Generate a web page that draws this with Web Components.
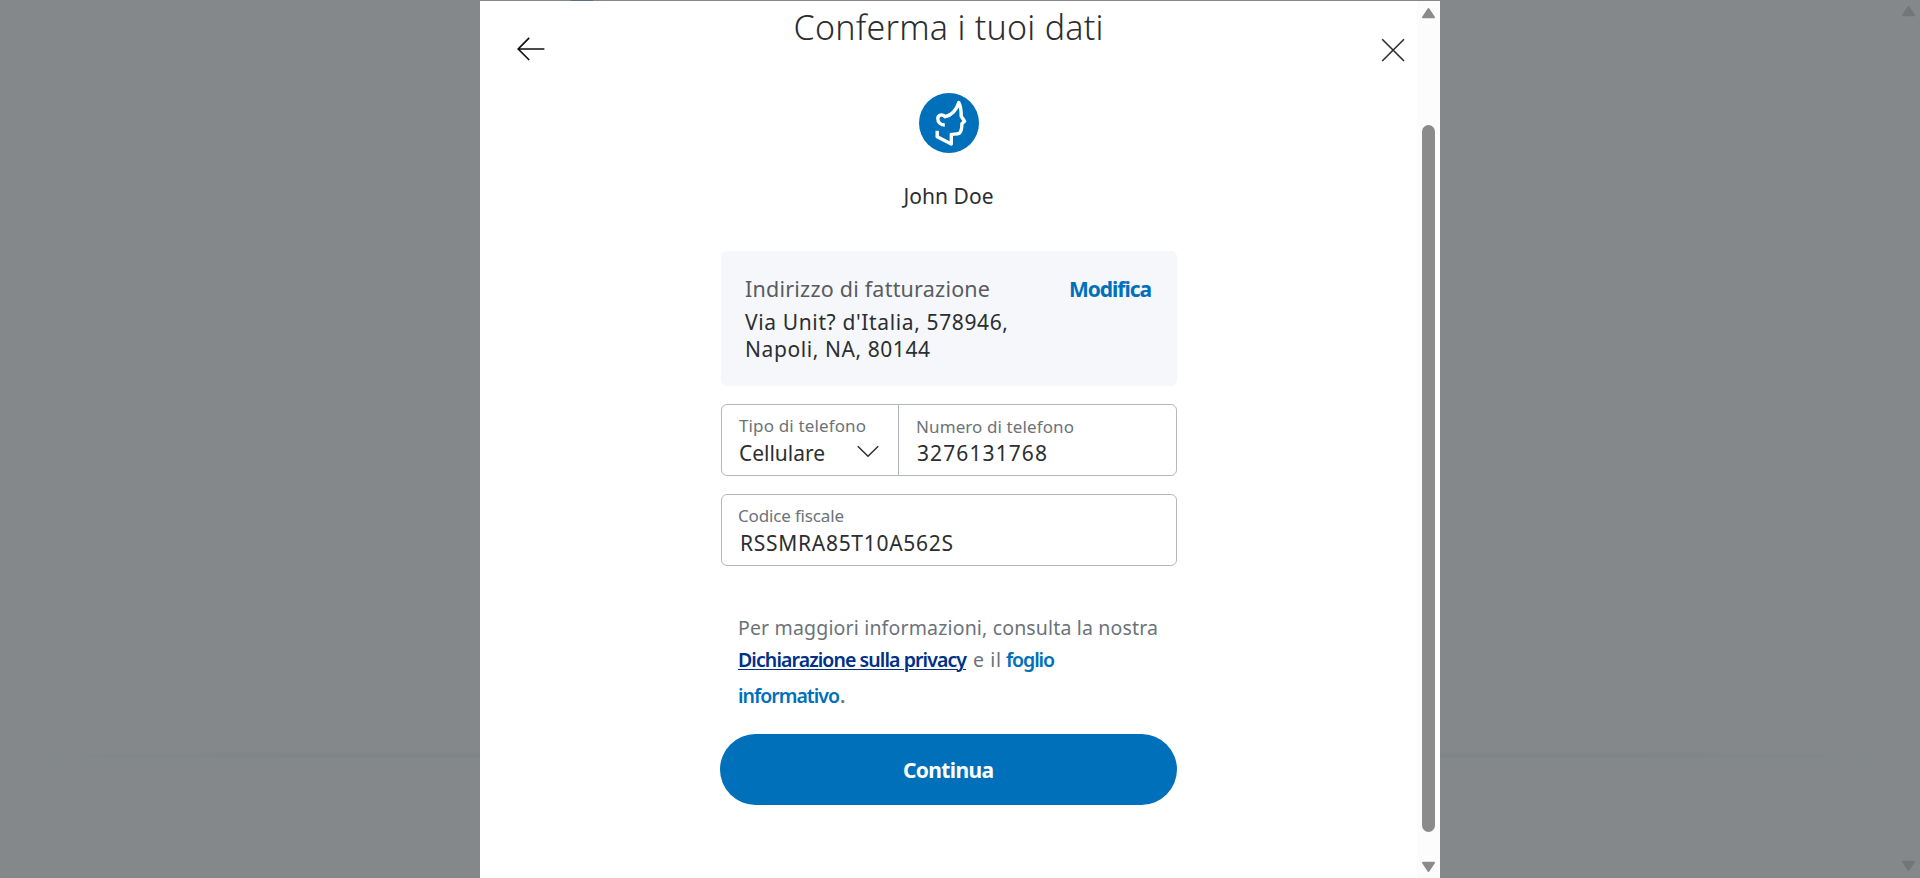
<!DOCTYPE html>
<html lang="it">
<head>
<meta charset="utf-8">
<title>Conferma i tuoi dati</title>
<style>
html,body{margin:0;height:100%;overflow:hidden;background:#84888b}
body{font-family:"Noto Sans","Open Sans",sans-serif;color:#2c2e2f}
</style>
</head>
<body>
<confirm-page></confirm-page>
<script>
class Base extends HTMLElement{
  constructor(){super();this.attachShadow({mode:'open'}).innerHTML=this.view();}
  view(){return '<slot></slot>';}
}
// Line of text whose tracking is adjusted to fill the width in "w".
customElements.define('ui-text',class extends Base{
  view(){return `<style>:host{display:block;white-space:nowrap;font-size:21px;line-height:28px}
  span{display:inline-block;font-size:inherit}
  :host(.u) span{text-decoration:underline;text-decoration-thickness:1px;text-underline-offset:2px;text-decoration-skip-ink:auto}</style><span><slot></slot></span>`;}
  connectedCallback(){requestAnimationFrame(()=>this.fit());this.fit();}
  fit(){
    const w=+this.getAttribute('w'),s=this.shadowRoot.querySelector('span'),n=this.textContent.length;
    if(!w||!n)return;
    s.style.letterSpacing='0px';s.style.marginRight='0px';
    const d=(w-s.getBoundingClientRect().width)/(n-1);
    s.style.letterSpacing=d+'px';
    s.style.marginRight=-d+'px';
  }
});
customElements.define('user-avatar',class extends Base{
  view(){return `<style>:host{display:block;width:60px;height:60px}svg{display:block}</style>
  <svg width="60" height="60" viewBox="0 0 60 60"><circle cx="30" cy="30" r="30" fill="#0070ba"/>
  <path d="M25.8 32C21.4 32.1 18.7 29 18.8 25.6C18.9 22 23.2 20.6 26.2 23.7C32.5 22.2 37.5 16.5 39.8 9.6C41.8 13.6 42.3 18.5 42.2 23.2L45.6 28.2L42.9 30.7C42.9 35.4 42.2 38.6 40.3 40.2C38.3 41.4 35 40.9 32.3 41.4V51L18.2 43.7V37.8" fill="none" stroke="#fff" stroke-width="3.4" stroke-linejoin="round"/></svg>`;}
});
customElements.define('scroll-rail',class extends Base{
  view(){return `<style>:host{display:flex;flex-direction:column;align-items:center;width:23px;box-sizing:border-box;background:var(--rail,#fcfcfc);color:#8b8b8b;padding:6px 0 5px}
  svg{display:block;flex:none}i{display:block;width:13px;height:707px;margin:106px 0 auto;border-radius:7px;background:var(--thumb,#8b8b8b)}</style>
  <svg width="15" height="12" viewBox="0 0 15 12"><path d="M7.5 2L13 10.2H2Z" fill="currentColor" stroke="currentColor" stroke-width="2" stroke-linejoin="round"/></svg><i></i>
  <svg width="15" height="12" viewBox="0 0 15 12"><path d="M2 1.8H13L7.5 10Z" fill="currentColor" stroke="currentColor" stroke-width="2" stroke-linejoin="round"/></svg>`;}
});
customElements.define('address-card',class extends Base{
  view(){return `<style>:host{display:flex;justify-content:space-between;box-sizing:border-box;height:135px;margin-top:41px;padding:24px 25px 22px 24px;border-radius:6px;background:#f5f7fb}</style><div><slot></slot></div><slot name="action"></slot>`;}
});
customElements.define('form-field',class extends Base{
  view(){return `<style>:host{display:block;flex:1;box-sizing:border-box;padding:11px 18px 0}</style><slot></slot>`;}
});
customElements.define('field-group',class extends Base{
  view(){return `<style>:host{display:flex;box-sizing:border-box;height:72px;margin-top:18px;border:1px solid #b2b8bb;border-radius:6px}</style><slot></slot>`;}
});
customElements.define('pill-button',class extends Base{
  view(){return `<style>:host{display:block}button{display:flex;justify-content:center;align-items:center;width:100%;height:71px;border:0;padding:1px 0 0;border-radius:36px;background:#0070ba;color:#fff;font:inherit}</style><button><slot></slot></button>`;}
});
customElements.define('icon-button',class extends Base{
  view(){return `<style>:host{display:block}button{display:block;border:0;padding:0;background:none;color:inherit}</style><button><slot></slot></button>`;}
});
customElements.define('confirm-page',class extends Base{
  view(){return `<style>
  :host{display:grid;grid-template-columns:480px 960px 1fr;height:878px;position:relative;background:#84888b}
  .left,.right{padding-top:753px}
  .left:before,.right:before{content:"";display:block;height:5px;background:linear-gradient(90deg,#84888b,#808588 60%)}
  .right:before{background:linear-gradient(270deg,#84888b,#808588 60%)}
  .right{display:block;position:relative}
  .outer{position:absolute;top:-1px;right:0;height:878px;--rail:transparent;--thumb:transparent;opacity:.42;filter:brightness(.67)}
  .tip{position:absolute;left:571px;top:0;width:22px;height:1px;background:#5f6b89}
  main{display:grid;grid-template-columns:240px 457px 1fr 23px;margin-top:1px;height:877px;background:#fff}
  .back{margin:36px 0 0 37px}.close{margin:37px 0 0 204px;color:#2c2e2f}
  .col{display:flex;flex-direction:column}
  .in{margin-left:1px}
  .t{font-size:34px;font-weight:300;line-height:40px;margin-top:6px;align-self:center}
  user-avatar{align-self:center;margin-top:46px}
  .name{align-self:center;margin-top:29px}
  .lab{font-size:17px;line-height:20px;color:#6c7378}
  .g{color:#5a5c5e;font-size:21.5px;margin-bottom:6px}
  .a{line-height:27px}
  .m{color:#0070ba;font-weight:700;font-size:21px}
  .v{margin-top:3px}
  .tel{flex:none;width:177px;border-right:1px solid #b2b8bb;padding-right:19px}
  .row{display:flex;align-items:center;justify-content:space-between}
  .row svg{margin-top:-1px}
  .p{margin:47px 0 0 18px;color:#6c7378}.p ui-text{font-size:19.5px;line-height:30px}
  .l{display:flex}.b{font-weight:600;color:#0070ba}.u{color:#003087}
  pill-button{margin-top:23px}pill-button ui-text{font-weight:700}
  svg{display:block}
  </style>
  <div class="left"></div>
  <main>
    <icon-button class="back"><svg width="28" height="24" viewBox="0 0 28 24" fill="none" stroke="#111" stroke-width="1.7"><path d="M12.2 .8L1.2 12L12.2 23M1.2 12H27.4"/></svg></icon-button>
    <div class="col">
      <ui-text class="t" w="310">Conferma i tuoi dati</ui-text>
      <user-avatar></user-avatar>
      <ui-text class="name" w="90">John Doe</ui-text>
      <div class="in">
        <address-card>
          <ui-text class="g" w="245">Indirizzo di fatturazione</ui-text>
          <ui-text class="a" w="263">Via Unit? d'Italia, 578946,</ui-text>
          <ui-text class="a" w="185">Napoli, NA, 80144</ui-text>
          <ui-text class="m" slot="action" w="83">Modifica</ui-text>
        </address-card>
        <field-group>
          <form-field class="tel"><ui-text class="lab" w="127" style="margin-left:-1px">Tipo di telefono</ui-text>
            <div class="row"><ui-text class="v" w="86" style="margin-left:-1px">Cellulare</ui-text><svg width="22" height="13" viewBox="0 0 22 13" fill="none" stroke="#2c2e2f" stroke-width="1.5"><path d="M.8 1.2L11 11.3L21.2 1.2"/></svg></div></form-field>
          <form-field style="padding-top:12px"><ui-text class="lab" w="158" style="margin-left:-1px">Numero di telefono</ui-text><ui-text class="v" style="margin-top:2px" w="130">3276131768</ui-text></form-field>
        </field-group>
        <field-group><form-field><ui-text class="lab" w="106" style="margin-left:-2px">Codice fiscale</ui-text><ui-text class="v" w="213">RSSMRA85T10A562S</ui-text></form-field></field-group>
      </div>
      <div class="p">
        <ui-text w="420">Per maggiori informazioni, consulta la nostra</ui-text>
        <div class="l" style="margin-top:2px"><ui-text class="b u" w="229">Dichiarazione sulla privacy</ui-text><ui-text w="28" style="margin-left:6px">e il</ui-text><ui-text class="b" w="49" style="margin-left:5px">foglio</ui-text></div>
        <div class="l" style="margin-top:6px"><ui-text class="b" w="102">informativo</ui-text><ui-text style="font-weight:600">.</ui-text></div>
      </div>
      <pill-button><ui-text w="91">Continua</ui-text></pill-button>
    </div>
    <icon-button class="close"><svg width="24" height="24" viewBox="0 0 24 24" fill="none" stroke="#2c2e2f" stroke-width="1.6"><path d="M1.2 1.2L23 23M23 1.2L1.2 23"/></svg></icon-button>
    <scroll-rail></scroll-rail>
  </main>
  <div class="right"><scroll-rail class="outer"></scroll-rail></div>
  <div class="tip"></div>`;}
});
</script>
</body>
</html>
